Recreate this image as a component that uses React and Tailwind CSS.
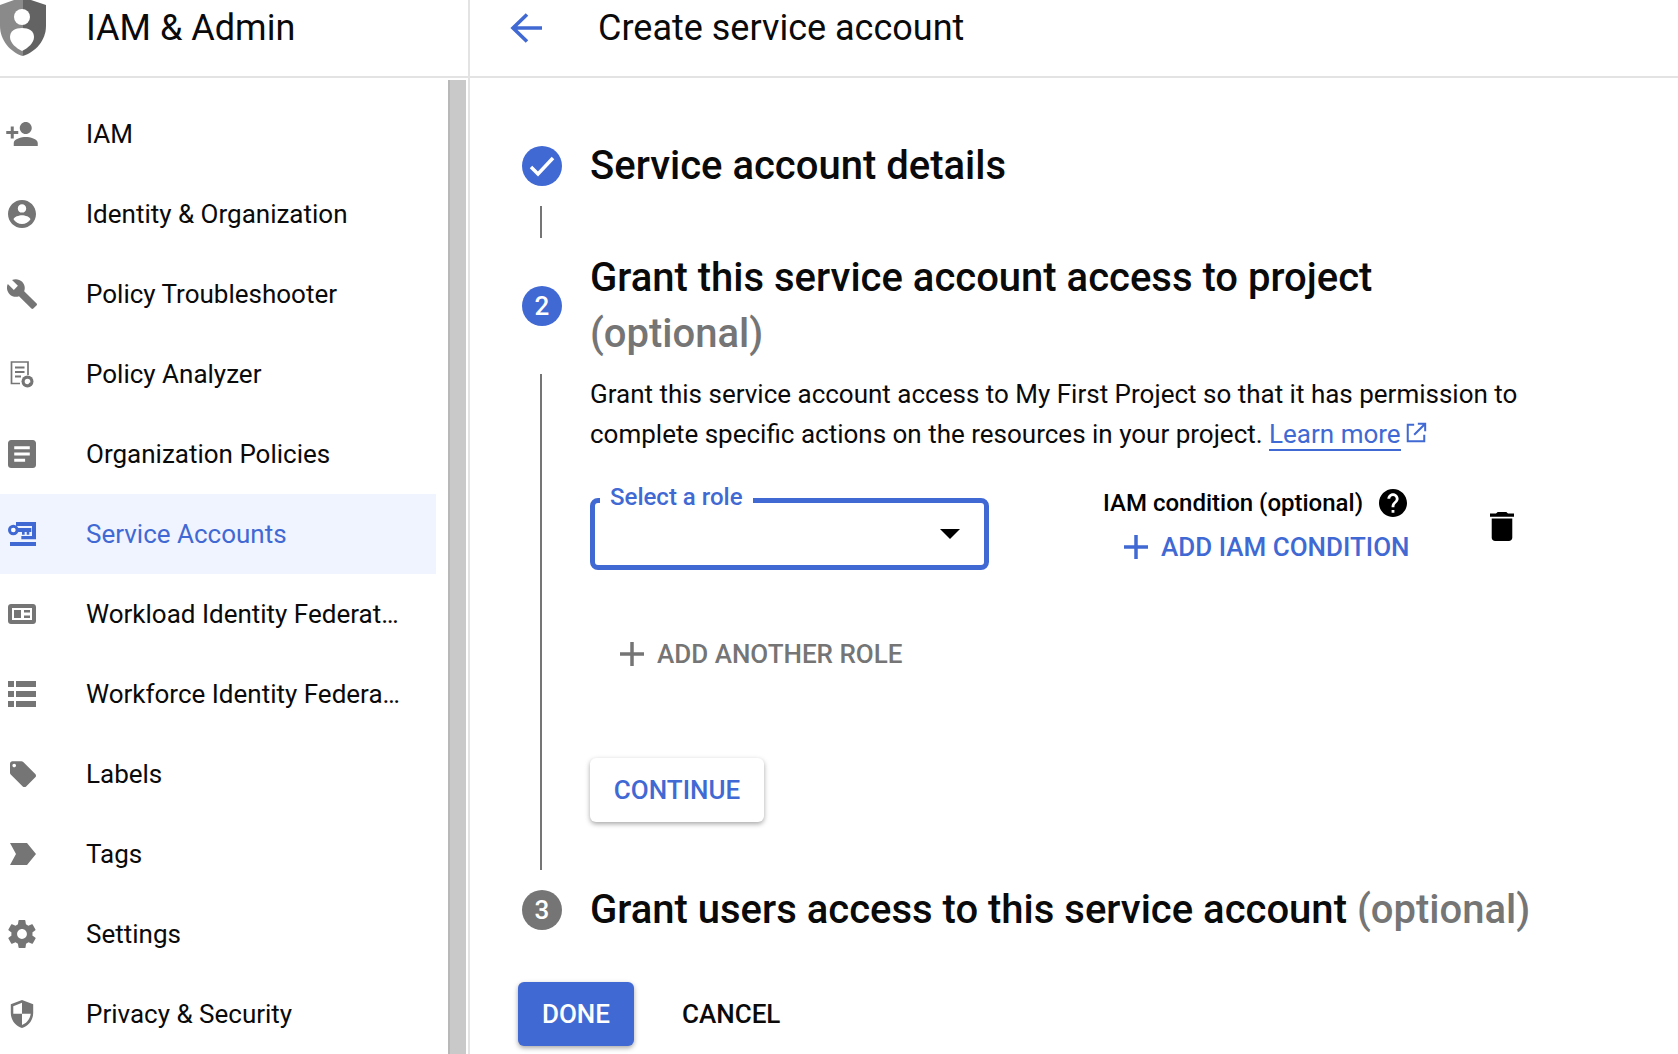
import React from "react";

const G = "#757575";
const B = "#4169d4";

function Ic({ d, c = G, w = 28, h = 28, vb = "0 0 24 24", cn = "ml-2", children }) {
  return (
    <svg width={w} height={h} viewBox={vb} fill={c} className={`shrink-0 ${cn}`}>
      {d && <path d={d} />}
      {children}
    </svg>
  );
}

const nav = [
  { t: "IAM", i: <Ic w={32} h={24} cn="ml-[6px]" vb="2 4 21 16" d="M15 12c2.200 0 4-1.800 4-4s-1.800-4-4-4-4 1.800-4 4 1.800 4 4 4zm-8-2V7H5v3H2v2h3v3h2v-3h3v-2H7zm8 4c-2.700 0-8 1.300-8 4v2h16v-2c0-2.700-5.300-4-8-4z" /> },
  { t: "Identity & Organization", i: <Ic vb="2 2 20 20" d="M12 2C6.500 2 2 6.500 2 12s4.500 10 10 10 10-4.500 10-10S17.500 2 12 2zm0 3c1.700 0 3 1.300 3 3s-1.300 3-3 3-3-1.300-3-3 1.300-3 3-3zm0 14.200c-2.500 0-4.700-1.300-6-3.200 0-2 4-3.100 6-3.100s6 1.100 6 3.100c-1.300 1.900-3.500 3.200-6 3.200z" /> },
  { t: "Policy Troubleshooter", i: <Ic w={30} h={30} cn="ml-[7px]" vb="1 1 22 22" d="M22.700 19l-9.100-9.100c.9-2.300.4-5-1.500-6.900-2-2-5-2.400-7.400-1.300L9 6 6 9 1.600 4.700C.4 7.100.9 10.100 2.900 12.100c1.900 1.900 4.600 2.400 6.900 1.500l9.100 9.100c.4.4 1 .4 1.400 0l2.300-2.300c.5-.4.5-1.100.1-1.400z" /> },
  { t: "Policy Analyzer", i: (
    <Ic w={24} h={27} cn="ml-[10px]" vb="0 0 24 27">
      <path fill="none" stroke={G} strokeWidth="1.700" d="M18 14V1H1.500v21.500H10" />
      <path d="M5 5.500h9.500v2H5zM5 10h9.500v2H5zM5 14.500h6v2H5z" />
      <circle cx="17.500" cy="20.500" r="6" />
      <circle cx="17.500" cy="20.500" r="2.800" fill="#fff" />
      <path d="M19 22l2 2" stroke={G} strokeWidth="1.300" />
    </Ic>
  ) },
  { t: "Organization Policies", i: <Ic vb="3 3 18 18" d="M19 3H5c-1.100 0-2 .9-2 2v14c0 1.100.9 2 2 2h14c1.100 0 2-.9 2-2V5c0-1.100-.9-2-2-2zM14 17H7v-2h7v2zm3-4H7v-2h10v2zm0-4H7V7h10v2z" /> },
  { t: "Service Accounts", active: true, i: (
    <Ic c={B} h={24} vb="0 0 84 72">
      <path d="M6 60h78v12H6zM24 0h60v52H40v-10h32V12H24z" />
      <circle cx="16" cy="24" r="16" />
      <path d="M26 18h44v12H64v8h-8v-8h-6v8h-8v-8H26z" />
      <circle cx="16" cy="24" r="7" fill="#fff" />
    </Ic>
  ) },
  { t: "Workload Identity Federation Pool", i: (
    <Ic h={20} vb="0 0 28 20">
      <path fillRule="evenodd" d="M3 0h22c1.700 0 3 1.300 3 3v14c0 1.700-1.300 3-3 3H3c-1.700 0-3-1.300-3-3V3C0 1.300 1.300 0 3 0zM4 4v12h20V4H4zM6 6h7v8H6zM16 6h6v2.500h-6zM16 11.500h6V14h-6z" />
    </Ic>
  ) },
  { t: "Workforce Identity Federation", i: <Ic h={26} vb="0 0 28 26" d="M0 0h6v6H0zM8 0h20v6H8zM0 10h6v6H0zM8 10h20v6H8zM0 20h6v6H0zM8 20h20v6H8z" /> },
  { t: "Labels", i: <Ic w={26} h={26} cn="ml-[10px]" vb="2 2 21.600 21.200" d="M23 12.600L13 2.600C12.600 2.200 12 2 11.500 2H4C2.900 2 2 2.900 2 4v7.500c0 .5.2 1.100.6 1.500l10 10c.4.4.900.600 1.400.600s1-.2 1.400-.6l7.600-7.600c.8-.8.8-2 0-2.800zM5.500 7C4.700 7 4 6.300 4 5.500S4.700 4 5.500 4 7 4.700 7 5.500 6.300 7 5.500 7z" /> },
  { t: "Tags", i: <Ic w={26} h={22} cn="ml-[10px]" vb="0 0 26 22" d="M0 0h17l9 11-9 11H0l6-11z" /> },
  { t: "Settings", i: <Ic vb="2.200 2 19.600 20" d="M19.400 13c0-.3.1-.6.1-1s0-.7-.1-1l2.100-1.600c.2-.2.2-.4.1-.6l-2-3.500c-.1-.2-.4-.3-.6-.2l-2.500 1c-.5-.4-1.100-.7-1.700-1l-.4-2.600c0-.3-.2-.5-.4-.5h-4c-.2 0-.5.200-.5.400l-.4 2.700c-.6.300-1.200.6-1.700 1l-2.500-1c-.2-.1-.5 0-.6.2l-2 3.500c-.1.200-.1.400.1.600L4.500 11c0 .3-.1.700-.1 1s0 .7.1 1l-2.100 1.600c-.2.200-.2.400-.1.600l2 3.500c.1.200.4.300.6.200l2.500-1c.5.400 1.100.7 1.700 1l.4 2.600c0 .3.300.5.500.5h4c.2 0 .5-.2.500-.4l.4-2.700c.6-.3 1.200-.6 1.700-1l2.500 1c.2.100.5 0 .6-.2l2-3.500c.1-.2.100-.4-.1-.6L19.400 13zM12 15.500c-1.900 0-3.500-1.600-3.500-3.500s1.600-3.500 3.500-3.500 3.500 1.600 3.500 3.500-1.600 3.500-3.500 3.500z" /> },
  { t: "Privacy & Security", i: <Ic w={24} h={28} cn="ml-[10px]" vb="3 1 18 22.500" d="M12 1L3 4.500v7c0 5.500 3.800 10.700 9 12 5.200-1.300 9-6.500 9-12v-7L12 1zm0 11h7c-.5 4.200-3.300 7.900-7 9v-9H5V6l7-2.800V12z" /> },
];

function NavRow({ t, i, active }) {
  return (
    <div className={`flex h-20 w-[436px] shrink-0 items-center ${active ? "bg-[#f0f4fe] text-[#4169d4]" : "text-[#0a0a0a]"}`}>
      <div className="flex w-[86px] shrink-0 items-center">{i}</div>
      <span className="w-[314px] truncate text-[26px] leading-8">{t}</span>
    </div>
  );
}

function Num({ n, c, children }) {
  return (
    <div className={`flex h-10 w-10 shrink-0 items-center justify-center rounded-full text-[26px] font-medium text-white ${c}`}>
      {n}
      {children}
    </div>
  );
}

function Plus({ c }) {
  return (
    <svg width="26" height="26" viewBox="0 0 26 26" className="shrink-0">
      <path d="M1 13h24M13 1v24" stroke={c} strokeWidth="3.500" />
    </svg>
  );
}

export default function App() {
  return (
    <div className="flex h-[1054px] w-[1678px] overflow-hidden bg-white font-['Roboto',sans-serif] text-[#0a0a0a]">
      <aside className="flex h-full w-[470px] shrink-0 flex-col border-r-2 border-[#e3e3e3]">
        <header className="flex h-[78px] shrink-0 items-start border-b-2 border-[#e3e3e3]">
          <div className="flex w-[86px] shrink-0">
            <svg width="46" height="57" viewBox="0 0 46 57">
              <defs>
                <linearGradient id="sh" x1="0" x2="1" y1="0" y2="0">
                  <stop offset="0" stopColor="#8a8a8a" />
                  <stop offset=".5" stopColor="#8a8a8a" />
                  <stop offset=".5" stopColor="#636363" />
                  <stop offset="1" stopColor="#636363" />
                </linearGradient>
              </defs>
              <path d="M14 0L0 5v21c0 14 10 26 22.500 30C36 52 46 40 46 26V5L31 0z" fill="url(#sh)" />
              <circle cx="22" cy="17" r="8" fill="#fff" />
              <path d="M22 28c-7 0-12 3-12 9 0 6 6 11 12 14 6-3 12-8 12-14 0-6-5-9-12-9z" fill="#fff" />
            </svg>
          </div>
          <h1 className="mt-1.5 text-[36px] leading-11 font-normal text-[#0a0a0a]">IAM &amp; Admin</h1>
        </header>
        <div className="flex min-h-0 flex-1 justify-between pr-0.5">
          <nav className="flex flex-col pt-4">
            {nav.map((n) => (
              <NavRow key={n.t} {...n} />
            ))}
          </nav>
          <div className="mt-0.5 w-[18px] border-l-2 border-[#b8b8b8] bg-[#c9c9c9]" />
        </div>
      </aside>

      <main className="flex min-w-0 flex-1 flex-col">
        <header className="flex h-[78px] shrink-0 items-center border-b-2 border-[#e3e3e3] pb-[20px]">
          <svg width="32" height="30" viewBox="0 0 32 30" className="ml-[40px] shrink-0">
            <path d="M32 15H4M17 1.500L3 15l14 13.500" fill="none" stroke={B} strokeWidth="3.600" />
          </svg>
          <h2 className="ml-[56px] text-[36px] leading-11 font-normal text-[#0a0a0a]">Create service account</h2>
        </header>

        <div className="flex flex-col pt-[68px] pl-[52px]">
          <div className="flex items-center">
            <Num c="bg-[#4169d4]">
              <svg width="28" height="24" viewBox="0 0 28 24">
                <path d="M3 13l7 7L25 4" fill="none" stroke="#fff" strokeWidth="3.500" />
              </svg>
            </Num>
            <h3 className="ml-[28px] text-[40px] leading-10 font-medium whitespace-nowrap text-[#0a0a0a]">Service account details</h3>
          </div>
          <div className="mt-5 mb-3 ml-[18px] h-8 w-0.5 bg-[#757575]" />
          <div className="flex items-center">
            <Num c="bg-[#4169d4]" n="2" />
            <h3 className="ml-[28px] w-[800px] text-[40px] leading-14 font-medium text-[#0a0a0a]">
              Grant this service account access to project <span className="text-[#757575]">(optional)</span>
            </h3>
          </div>
          <div className="flex">
            <div className="mt-3 ml-[18px] h-[496px] w-0.5 shrink-0 bg-[#757575]" />
            <div className="ml-[48px] flex min-w-0 flex-1 flex-col pt-3">
              <p className="w-[950px] text-[26px] leading-10 text-[#0a0a0a]">
                Grant this service account access to My First Project so that it has permission to complete specific actions on the resources in your project.{" "}
                <span className="border-b-2 border-[#4169d4] text-[#4169d4]">Learn more</span>
                <svg width="22" height="22" viewBox="0 0 24 24" className="ml-1 inline-block align-[-1px]">
                  <path d="M10 3H3v18h18v-7M14 2h8v8M22 2L10 14" fill="none" stroke={B} strokeWidth="2.200" />
                </svg>
              </p>
              <div className="mt-[44px] flex items-start">
                <div className="relative h-[72px] w-[399px] shrink-0 rounded-lg border-[5px] border-[#4169d4]">
                  <span className="absolute top-[-22px] left-[5px] bg-white px-2.5 text-[24px] leading-8 font-medium text-[#4169d4]">Select a role</span>
                  <div className="absolute top-[26px] right-[24px] h-0 w-0 border-x-[10px] border-t-[10px] border-x-transparent border-t-black" />
                </div>
                <div className="ml-[114px] flex w-[310px] shrink-0 flex-col items-start">
                  <div className="mt-[-11px] flex h-8 items-center">
                    <span className="text-[24px] font-medium whitespace-nowrap text-black">IAM condition (optional)</span>
                    <svg width="28" height="28" viewBox="2 2 20 20" className="ml-[16px] shrink-0">
                      <path d="M12 2C6.500 2 2 6.500 2 12s4.500 10 10 10 10-4.500 10-10S17.500 2 12 2zm1 17h-2v-2h2v2zm2.100-7.700l-.9.9c-.7.700-1.200 1.300-1.200 2.800h-2v-.5c0-1.100.5-2.100 1.200-2.800l1.200-1.300c.4-.3.600-.8.600-1.400 0-1.100-.9-2-2-2s-2 .9-2 2H8c0-2.200 1.800-4 4-4s4 1.800 4 4c0 .9-.4 1.700-.9 2.300z" />
                    </svg>
                  </div>
                  <div className="mt-3 ml-5 flex items-center">
                    <Plus c={B} />
                    <span className="ml-3 text-[26px] leading-8 font-medium whitespace-nowrap text-[#4169d4]">ADD IAM CONDITION</span>
                  </div>
                </div>
                <svg width="24" height="29" viewBox="5 3 14 18" preserveAspectRatio="none" className="mt-[14px] ml-[77px] shrink-0">
                  <path d="M6 19c0 1.100.9 2 2 2h8c1.100 0 2-.9 2-2V7H6v12zM19 4h-3.500l-1-1h-5l-1 1H5v2h14V4z" />
                </svg>
              </div>
              <div className="mt-[68px] ml-[29px] flex items-center">
                <Plus c={G} />
                <span className="ml-3 text-[26px] leading-8 font-medium text-[#757575]">ADD ANOTHER ROLE</span>
              </div>
              <button className="mt-[88px] h-16 w-[174px] rounded-md bg-white text-[26px] font-medium text-[#4169d4] shadow-[0_2px_5px_rgba(0,0,0,0.35)]">CONTINUE</button>
            </div>
          </div>
          <div className="mt-4 flex items-center">
            <Num c="bg-[#757575]" n="3" />
            <h3 className="ml-[28px] text-[40px] leading-12 font-medium whitespace-nowrap text-[#0a0a0a]">
              Grant users access to this service account <span className="text-[#757575]">(optional)</span>
            </h3>
          </div>
          <div className="mt-12 ml-[-4px] flex items-center">
            <button className="h-16 w-[116px] rounded-md bg-[#4169d4] text-[26px] font-medium text-white shadow-[0_2px_5px_rgba(0,0,0,0.35)]">DONE</button>
            <span className="ml-12 text-[26px] font-medium text-[#0a0a0a]">CANCEL</span>
          </div>
        </div>
      </main>
    </div>
  );
}
